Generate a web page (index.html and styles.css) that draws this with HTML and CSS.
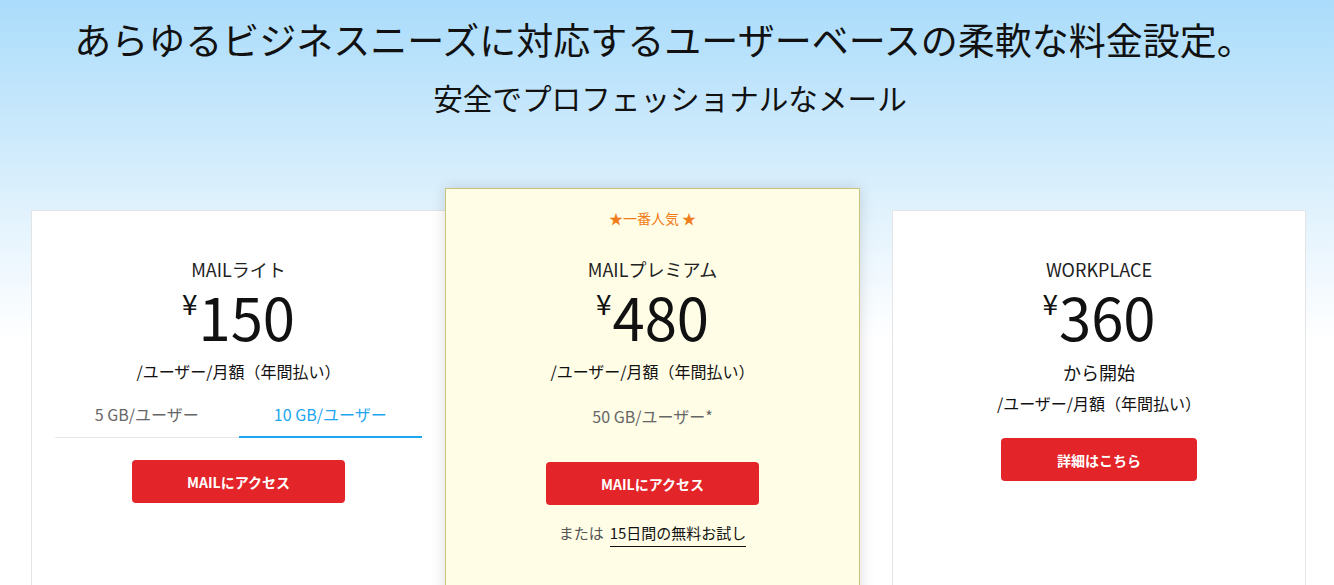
FILE: index.html
```html
<!DOCTYPE html>
<html lang="ja">
<head>
<meta charset="utf-8">
<title>料金設定</title>
<link rel="stylesheet" href="styles.css">
</head>
<body>
<div class="page">
  <header class="hero">
    <h1 class="hero-title">あらゆるビジネスニーズに対応するユーザーベースの柔軟な料金設定。</h1>
    <p class="hero-sub">安全でプロフェッショナルなメール</p>
  </header>
  <section class="plans">
    <div class="card card-lite">
      <div class="plan-name">MAILライト</div>
      <div class="price"><span class="yen">¥</span><span class="amount">150</span></div>
      <div class="per">/ユーザー/月額（年間払い）</div>
      <div class="tabs">
        <div class="tab">5 GB/ユーザー</div>
        <div class="tab tab-active">10 GB/ユーザー</div>
      </div>
      <a class="btn btn-lite">MAILにアクセス</a>
    </div>
    <div class="card card-featured">
      <div class="badge">★一番人気 ★</div>
      <div class="plan-name">MAILプレミアム</div>
      <div class="price"><span class="yen">¥</span><span class="amount">480</span></div>
      <div class="per">/ユーザー/月額（年間払い）</div>
      <div class="storage">50 GB/ユーザー*</div>
      <a class="btn btn-featured">MAILにアクセス</a>
      <div class="trial"><span class="trial-or">または</span><a class="trial-link">15日間の無料お試し</a></div>
    </div>
    <div class="card card-work">
      <div class="plan-name">WORKPLACE</div>
      <div class="price"><span class="yen">¥</span><span class="amount">360</span></div>
      <div class="from">から開始</div>
      <div class="per per-work">/ユーザー/月額（年間払い）</div>
      <a class="btn btn-work">詳細はこちら</a>
    </div>
  </section>
</div>
</body>
</html>
```

FILE: styles.css
```css
* { box-sizing: border-box; }
html, body { margin: 0; padding: 0; }
body {
  font-family: "Noto Sans CJK JP", "Noto Sans", sans-serif;
  color: #111;
  background: linear-gradient(180deg, #aadcfb 0px, #d0ebfc 150px, #e3f3fd 220px, #f4fafe 290px, #ffffff 340px);
  min-height: 585px;
  overflow: hidden;
}
.page { width: 1334px; }
.hero { text-align: center; padding-top: 16px; }
.hero-title {
  margin: 0;
  font-size: 37px;
  font-weight: 400;
  line-height: 47px;
  color: #111;
  padding-right: 6px;
}
.hero-sub {
  margin: 16px 0 0;
  font-size: 29.6px;
  line-height: 38px;
  color: #111;
  padding-left: 6px;
}
.plans {
  display: flex;
  align-items: flex-start;
  padding-left: 31px;
  margin-top: 71px;
}
.card {
  width: 415px;
  min-height: 430px;
  background: #fff;
  border: 1px solid #e4e4e4;
  text-align: center;
  padding: 46px 23px 0;
  display: flex;
  flex-direction: column;
  align-items: center;
}
.card-lite { margin-top: 22px; }
.card-featured {
  position: relative;
  z-index: 1;
  margin-left: -1px;
  background: #fffde6;
  border-color: #c8c47e;
  box-shadow: 0 0 14px rgba(0, 0, 0, 0.14);
  padding-top: 19px;
  min-height: 460px;
}
.card-work { margin-top: 22px; margin-left: 32px; width: 414px; }
.badge {
  font-size: 14px;
  line-height: 20px;
  color: #f07d1c;
  margin-bottom: 29px;
}
.plan-name {
  font-size: 18px;
  line-height: 24px;
  color: #222;
}
.price {
  display: flex;
  justify-content: center;
  align-items: flex-start;
  margin-top: 6px;
}
.yen {
  font-size: 28px;
  line-height: 28px;
  margin-top: 2px;
  margin-right: 1px;
}
.amount {
  font-size: 58px;
  line-height: 58px;
}
.per {
  font-size: 16px;
  line-height: 24px;
  margin-top: 14px;
}
.tabs {
  display: flex;
  width: 100%;
  margin-top: 9px;
}
.tab {
  flex: 1;
  font-size: 16px;
  line-height: 24px;
  padding: 10px 0 11px;
  color: #666;
  border-bottom: 1px solid #e8e8e8;
}
.tab-active {
  color: #1ea6ef;
  border-bottom: 2px solid #1ea6ef;
  padding-bottom: 10px;
}
.btn {
  display: flex;
  align-items: center;
  justify-content: center;
  width: 213px;
  height: 43px;
  background: #e32428;
  color: #fff;
  font-size: 14px;
  font-weight: 700;
  border-radius: 4px;
  text-decoration: none;
}
.btn-lite { margin-top: 22px; }
.storage {
  font-size: 16px;
  line-height: 24px;
  color: #666;
  margin-top: 21px;
}
.btn-featured { margin-top: 34px; }
.trial {
  margin-top: 16px;
  font-size: 15px;
  line-height: 24px;
}
.trial-or { color: #555; margin-right: 6px; }
.trial-link {
  color: #111;
  border-bottom: 1px solid #111;
  padding-bottom: 3px;
}
.from {
  font-size: 18px;
  line-height: 27px;
  margin-top: 14px;
}
.per-work { margin-top: 5px; }
.btn-work { width: 196px; margin-top: 23px; }
```
